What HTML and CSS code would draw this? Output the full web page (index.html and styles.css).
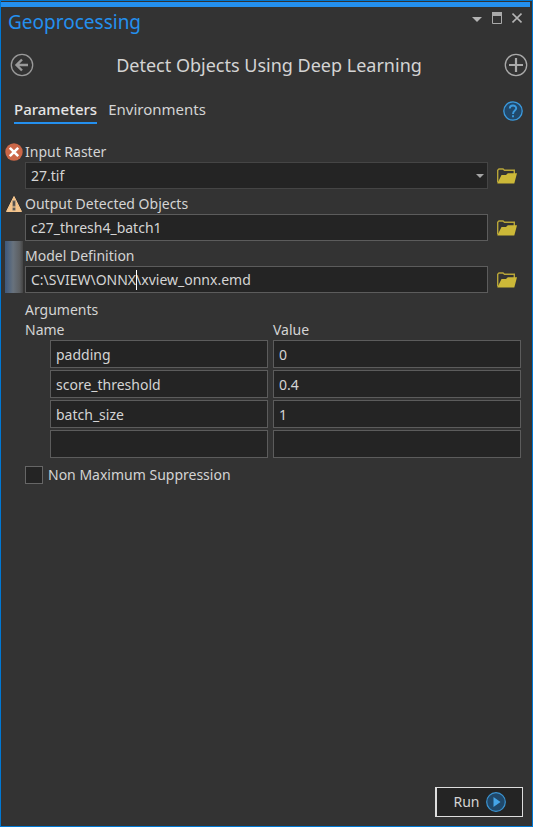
FILE: index.html
```html
<!DOCTYPE html>
<html lang="en">
<head>
<meta charset="utf-8">
<title>Geoprocessing</title>
<link rel="stylesheet" href="styles.css">
</head>
<body>
<svg class="defs" aria-hidden="true">
  <symbol id="folder" viewBox="0 0 20 16">
    <path d="M.7 14.5V2.2L2 1h4l1.5 1.2h9.8V6" fill="none" stroke="#b8a538" stroke-width="1.4"/>
    <path d="M.3 15.5 1 14 4.5 7H9l1.8-1.800H20L17.300 15.500z" fill="#ccb838"/>
  </symbol>
</svg>
<main class="pane">
  <div class="accent"></div>
  <header class="titlebar">
    <h1>Geoprocessing</h1>
    <div class="window-controls">
      <button type="button" aria-label="Menu"><svg width="10" height="12" viewBox="0 0 10 12"><path d="M0 5h10L5 10z" fill="#b4b4b4"/></svg></button>
      <button type="button" aria-label="Maximize"><svg width="10" height="12" viewBox="0 0 10 12"><path d="M.5.5h9v11h-9z" fill="none" stroke="#aaa"/><path d="M0 0h10v4H0z" fill="#aaa"/></svg></button>
      <button type="button" aria-label="Close"><svg width="10" height="12" viewBox="0 0 10 12"><path d="M.5 1.500l9 9M9.500 1.500l-9 9" stroke="#b4b4b4" stroke-width="1.600"/></svg></button>
    </div>
  </header>
  <div class="toolbar">
    <button type="button" aria-label="Back"><svg width="24" height="24" viewBox="0 0 24 24" fill="none" stroke="#9a9a9a"><circle cx="12" cy="12" r="10.700" stroke-width="1.300"/><path d="M18 12H7M12 6.500 6.500 12l5.500 5.500" stroke-width="2.400"/></svg></button>
    <h2>Detect Objects Using Deep Learning</h2>
    <button type="button" aria-label="Add"><svg width="24" height="24" viewBox="0 0 24 24" fill="none" stroke="#aaa"><circle cx="12" cy="12" r="10.700" stroke-width="1.300"/><path d="M12 5v14M5 12h14" stroke-width="2.200"/></svg></button>
  </div>
  <nav class="tabs">
    <a class="tab active" href="#parameters">Parameters</a>
    <a class="tab" href="#environments">Environments</a>
    <button type="button" class="help" aria-label="Help"><svg width="20" height="20" viewBox="0 0 20 20" fill="none" stroke="#3b9ade"><circle cx="10" cy="10" r="9.200" fill="#21486a" stroke-width="1.300"/><path d="M6.800 7.500C6.800 3.500 13.200 3.500 13.200 7.300 13.200 9.700 10 9.500 10 13M10 14.300v2" stroke-width="1.900"/></svg></button>
  </nav>
  <form class="form" id="parameters">
    <div class="param">
      <svg class="status" width="18" height="18" viewBox="0 0 18 18"><circle cx="9" cy="9" r="8.700" fill="#cb6748"/><path d="M4.800 4.800l8.400 8.400M13.200 4.800l-8.400 8.400" stroke="#fff" stroke-width="2.600"/></svg>
      <label for="raster">Input Raster</label>
      <div class="field select">
        <select id="raster"><option>27.tif</option></select>
        <svg class="arrow" width="8" height="4" viewBox="0 0 8 4"><path d="M0 0h8L4 4z" fill="#a5a5a5"/></svg>
      </div>
      <button type="button" class="browse" aria-label="Browse input raster"><svg width="20" height="16"><use href="#folder"/></svg></button>
    </div>
    <div class="param">
      <svg class="status" width="18" height="18" viewBox="0 0 18 18"><path d="M9 1.500 16.500 16.500h-15z" fill="#f4c48c" stroke="#f4c48c" stroke-linejoin="round"/><path d="M7.500 5.500h3v6h-3zM7.500 12.500h3v3h-3z" fill="#76716b"/><path d="M9 6.500v4M9 13.300v1.400" stroke="#332f2b"/></svg>
      <label for="output">Output Detected Objects</label>
      <div class="field"><input id="output" type="text" value="c27_thresh4_batch1"></div>
      <button type="button" class="browse" aria-label="Browse output"><svg width="20" height="16"><use href="#folder"/></svg></button>
    </div>
    <div class="param">
      <span class="marker"></span>
      <label for="model">Model Definition</label>
      <div class="field"><input id="model" type="text" value="C:\SVIEW\ONNX\xview_onnx.emd"><span class="caret"></span></div>
      <button type="button" class="browse" aria-label="Browse model"><svg width="20" height="16"><use href="#folder"/></svg></button>
    </div>
    <table class="arguments">
      <caption>Arguments</caption>
      <thead><tr><th scope="col">Name</th><th scope="col">Value</th></tr></thead>
      <tbody>
        <tr><td><input type="text" aria-label="Name 1" value="padding"></td><td><input type="text" aria-label="Value 1" value="0"></td></tr>
        <tr><td><input type="text" aria-label="Name 2" value="score_threshold"></td><td><input type="text" aria-label="Value 2" value="0.4"></td></tr>
        <tr><td><input type="text" aria-label="Name 3" value="batch_size"></td><td><input type="text" aria-label="Value 3" value="1"></td></tr>
        <tr><td><input type="text" aria-label="Name 4"></td><td><input type="text" aria-label="Value 4"></td></tr>
      </tbody>
    </table>
    <div class="check"><input type="checkbox" id="nms"><label for="nms">Non Maximum Suppression</label></div>
  </form>
  <footer class="footer">
    <button type="button" class="run">Run
      <svg width="20" height="20" viewBox="0 0 20 20"><circle cx="10" cy="10" r="9.300" fill="#20486a" stroke="#3b94d2" stroke-width="1.200"/><path d="M7.500 5 14.500 10l-7 5z" fill="#45a5e8"/></svg>
    </button>
  </footer>
</main>
</body>
</html>
```
FILE: styles.css
```css
* { box-sizing: border-box; }

body {
  margin: 0;
  background: #333;
  color: #d4d4d4;
  font: 14px/20px "Noto Sans", "Open Sans", sans-serif;
}

button, input, select { font: inherit; color: inherit; }

button {
  display: flex;
  align-items: center;
  padding: 0;
  border: 0;
  background: none;
}

.defs { position: absolute; width: 0; height: 0; }

.pane {
  display: flex;
  flex-direction: column;
  min-height: 100vh;
  padding-top: 1px;
  border: 1px solid #0078d4;
}

.accent { height: 5px; margin-right: 2px; background: #2490ef; }

.titlebar {
  display: flex;
  justify-content: space-between;
  align-items: flex-start;
  height: 38px;
  padding: 0 10px 0 7px;
}

h1, h2 { margin: 0; font-weight: 400; }
h1 { color: #2490ef; font-size: 19px; line-height: 30px; }

.window-controls { display: flex; gap: 10px; padding-top: 5px; }

.toolbar {
  display: flex;
  align-items: center;
  height: 40px;
  padding: 0 4px 0 9px;
}

h2 { flex: 1; text-align: center; font-size: 18px; line-height: 28px; }

.tabs {
  display: flex;
  align-items: center;
  gap: 11px;
  height: 52px;
  padding: 0 9px 0 13px;
}

.tab {
  margin-bottom: 4px;
  padding: 4px 0 3px;
  border-bottom: 2px solid transparent;
  color: #d4d4d4;
  font-size: 15px;
  text-decoration: none;
}
.tab.active { border-color: #2490ef; font-weight: 500; color: #e4e4e4; }
.help { margin-left: auto; }

.form { padding: 0 11px 0 4px; }

.param {
  display: grid;
  grid-template-columns: 20px 1fr 33px;
  grid-template-rows: 25px 27px;
}

.param label { padding-top: 5px; }
.status { align-self: end; margin-bottom: 1px; }
.marker {
  grid-row: 1 / 3;
  width: 18px;
  background: linear-gradient(90deg, #3d587c, #68727d 45%, #5d6063 80%, #444);
}

.field { position: relative; grid-column: 2; grid-row: 2; }
.browse { grid-column: 3; grid-row: 2; padding-left: 9px; }

input[type="text"], select {
  display: block;
  width: 100%;
  height: 27px;
  padding: 0 5px;
  border: 1px solid #5c5c5c;
  border-radius: 0;
  background: #242424;
  appearance: none;
  outline: 0;
}

select { border-color: #454545; }
.arrow { position: absolute; right: 4px; top: 12px; }
.caret { position: absolute; left: 111px; top: 4px; width: 1px; height: 20px; background: #fff; }

.arguments {
  width: calc(100% - 20px);
  margin: 7px 0 0 20px;
  border-collapse: collapse;
  table-layout: fixed;
}

.arguments caption, .arguments th { padding: 0; text-align: left; font-weight: 400; }
.arguments td { padding: 0 0 2px; }
.arguments td:first-child { padding: 0 5px 2px 25px; }
.arguments input[type="text"] { height: 28px; }

.check { display: flex; align-items: center; gap: 5px; margin: 5px 0 0 20px; }
.check input {
  width: 18px;
  height: 18px;
  margin: 0;
  border: 1px solid #666;
  background: #242424;
  appearance: none;
}

.footer { display: flex; justify-content: flex-end; margin-top: auto; padding: 0 9px 9px 0; }
.run {
  justify-content: center;
  gap: 6px;
  width: 88px;
  height: 30px;
  border: 1px solid #ddd;
  border-left-width: 2px;
  background: #242424;
}
```
